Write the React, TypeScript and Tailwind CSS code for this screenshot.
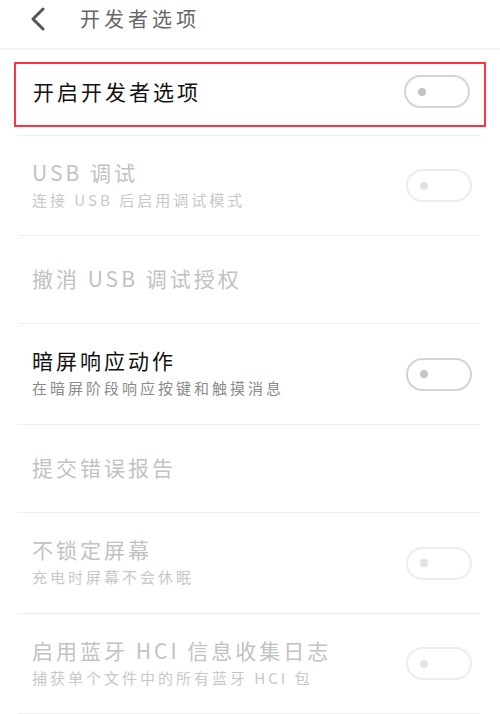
import React from 'react';

interface OptionRow {
  title: string;
  subtitle?: string;
  enabled: boolean;
  toggle: boolean;
  height: string;
}

const ROWS: OptionRow[] = [
  { title: 'USB 调试', subtitle: '连接 USB 后启用调试模式', enabled: false, toggle: true, height: 'h-[100px]' },
  { title: '撤消 USB 调试授权', enabled: false, toggle: false, height: 'h-[88px]' },
  { title: '暗屏响应动作', subtitle: '在暗屏阶段响应按键和触摸消息', enabled: true, toggle: true, height: 'h-[101px]' },
  { title: '提交错误报告', enabled: false, toggle: false, height: 'h-[88px]' },
  { title: '不锁定屏幕', subtitle: '充电时屏幕不会休眠', enabled: false, toggle: true, height: 'h-[101px]' },
  { title: '启用蓝牙 HCI 信息收集日志', subtitle: '捕获单个文件中的所有蓝牙 HCI 包', enabled: false, toggle: true, height: 'h-[100px]' },
];

const Toggle: React.FC<{ enabled: boolean }> = ({ enabled }) => (
  <div
    className={
      enabled
        ? 'w-[66px] h-[33px] rounded-full border-2 border-[#d4d4d4] flex items-center pl-[12px] shrink-0'
        : 'w-[66px] h-[33px] rounded-full border-2 border-[#ededed] flex items-center pl-[12px] shrink-0'
    }
  >
    <div className={enabled ? 'w-[8px] h-[8px] rounded-full bg-[#c4c4c4]' : 'w-[8px] h-[8px] rounded-full bg-[#e2e2e2]'} />
  </div>
);

export default function App() {
  return (
    <div
      className="w-[500px] h-[714px] bg-white overflow-hidden"
      style={{ fontFamily: '"Noto Sans CJK SC", "Noto Sans", sans-serif' }}
    >
      {/* header */}
      <div className="h-[50px] border-b-2 border-[#f2f2f2] flex items-center pb-[10px]">
        <svg className="ml-[29px]" width="18" height="24" viewBox="0 0 18 24" fill="none">
          <path d="M14 2 L4 12 L14 22" stroke="#555" strokeWidth="3" strokeLinecap="round" strokeLinejoin="round" />
        </svg>
        <span className="ml-[33px] text-[20px] tracking-[4px] text-[#666] leading-none">开发者选项</span>
      </div>

      {/* highlighted first row */}
      <div className="px-[14px] pt-[12px] pb-[8px]">
        <div className="h-[65px] border-2 border-[#ff3344] flex items-center justify-between pl-[17px] pr-[14px] pb-[6px]">
          <span className="text-[21px] tracking-[3px] text-[#111] leading-none">开启开发者选项</span>
          <Toggle enabled={true} />
        </div>
      </div>
      <div className="ml-[18px] mr-[20px] h-px bg-[#eeeeee]" />

      {ROWS.map((row) => (
        <div
          key={row.title}
          className={`${row.height} ml-[18px] mr-[20px] border-b border-[#eeeeee] flex items-center justify-between pl-[14px] pr-[8px]`}
        >
          <div className="flex flex-col gap-[9px] pb-[3px]">
            <span
              className={
                row.enabled
                  ? 'text-[21px] tracking-[3px] text-[#111] leading-none'
                  : 'text-[21px] tracking-[3px] text-[#c2c2c2] leading-none'
              }
            >
              {row.title}
            </span>
            {row.subtitle && (
              <span
                className={
                  row.enabled
                    ? 'text-[15px] tracking-[3px] text-[#8a8a8a] leading-none'
                    : 'text-[15px] tracking-[3px] text-[#c8c8c8] leading-none'
                }
              >
                {row.subtitle}
              </span>
            )}
          </div>
          {row.toggle && <Toggle enabled={row.enabled} />}
        </div>
      ))}
    </div>
  );
}
